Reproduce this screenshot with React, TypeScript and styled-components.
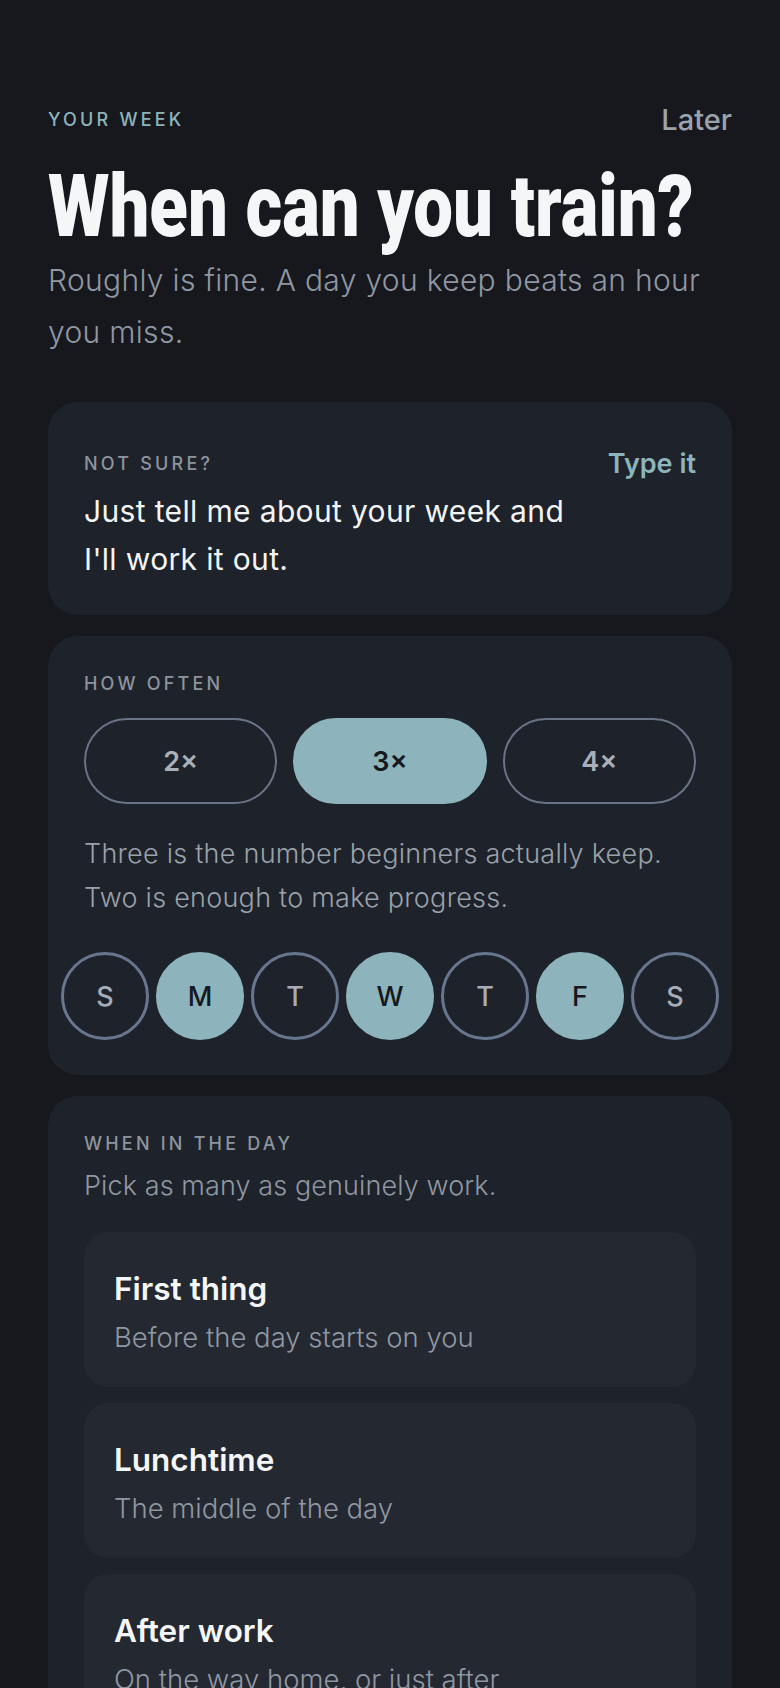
import React, { useLayoutEffect, useRef, useState } from 'react';
import styled, { createGlobalStyle } from 'styled-components';

const GlobalStyle = createGlobalStyle`
    html, body {
        margin: 0;
        padding: 0;
        background: #17181d;
    }
    body {
        font-family: Inter, Roboto, 'Noto Sans', sans-serif;
        color: #f3f4f6;
        -webkit-font-smoothing: antialiased;
    }
    * {
        box-sizing: border-box;
    }
`;

const Page = styled.div`
    min-height: 1688px;
    padding: 100px 48px 40px;
    background: #17181d;
    overflow: hidden;
`;

const Header = styled.div`
    display: flex;
    justify-content: space-between;
    align-items: center;
    height: 40px;
`;

const Eyebrow = styled.span<{ $accent?: boolean }>`
    font-size: 18px;
    line-height: 24px;
    font-weight: 500;
    letter-spacing: 3.2px;
    text-transform: uppercase;
    color: ${(p) => (p.$accent ? '#8db4bc' : '#8d949e')};
`;

const TextButton = styled.button<{ $accent?: boolean }>`
    border: 0;
    background: none;
    padding: 0;
    cursor: pointer;
    font-family: inherit;
    font-size: ${(p) => (p.$accent ? 27 : 29)}px;
    line-height: 34px;
    font-weight: ${(p) => (p.$accent ? 600 : 500)};
    color: ${(p) => (p.$accent ? '#8db4bc' : '#9ba3ad')};
`;

const Title = styled.h1`
    margin: 22px 0 0;
    font-family: Roboto, 'Noto Sans', sans-serif;
    font-size: 88px;
    line-height: 88px;
    font-weight: 900;
    white-space: nowrap;
    color: #f5f6f8;
`;

// the reference uses a condensed display face; squeeze the heavy sans to the same width
const TitleText = styled.span`
    display: inline-block;
    transform-origin: left center;
`;

const Subtitle = styled.p`
    margin: 4px 0 44px;
    font-size: 30px;
    line-height: 52px;
    font-weight: 300;
    letter-spacing: 0.32px;
    color: #8f97a3;
`;

const Stack = styled.div`
    display: flex;
    flex-direction: column;
    gap: 21px;
`;

const Card = styled.section`
    background: #1e222a;
    border-radius: 30px;
    padding: 36px 36px 35px;
`;

const AskCard = styled(Card)`
    display: flex;
    align-items: flex-start;
    gap: 20px;
    padding: 45px 36px 32px;
`;

const AskBody = styled.div`
    flex: 1;
    display: flex;
    flex-direction: column;
    padding-top: 5px;
`;

const AskText = styled.p`
    margin: 11px 0 0;
    font-size: 30px;
    line-height: 48px;
    font-weight: 400;
    letter-spacing: 0.35px;
    color: #f3f4f6;
`;

const Pills = styled.div`
    display: grid;
    grid-template-columns: repeat(3, 1fr);
    gap: 16px;
    margin-top: 22px;
`;

const Pill = styled.button<{ $on: boolean }>`
    height: 86px;
    border-radius: 43px;
    border: 2px solid ${(p) => (p.$on ? '#8db4bc' : '#6a7489')};
    background: ${(p) => (p.$on ? '#8db4bc' : 'transparent')};
    color: ${(p) => (p.$on ? '#161a20' : '#aab0b9')};
    font-family: inherit;
    font-size: 27px;
    font-weight: 600;
    cursor: pointer;
`;

const Note = styled.p`
    margin: 28px 0 0;
    font-size: 27px;
    line-height: 44px;
    font-weight: 300;
    letter-spacing: 0.25px;
    color: #9aa1ab;
`;

const Days = styled.div`
    display: flex;
    justify-content: center;
    gap: 7px;
    margin-top: 32px;
`;

const Day = styled.button<{ $on: boolean }>`
    flex: 0 0 88px;
    height: 88px;
    border-radius: 50%;
    border: 3px solid ${(p) => (p.$on ? '#8db4bc' : '#697690')};
    background: ${(p) => (p.$on ? '#8db4bc' : 'transparent')};
    color: ${(p) => (p.$on ? '#15181d' : '#a6adb7')};
    font-family: inherit;
    font-size: 27px;
    font-weight: 500;
    padding: 0;
    cursor: pointer;
`;

const Hint = styled.p`
    margin: 10px 0 0;
    font-size: 27px;
    line-height: 40px;
    font-weight: 300;
    letter-spacing: 0.1px;
    color: #8f97a3;
`;

const Options = styled.div`
    display: flex;
    flex-direction: column;
    gap: 16px;
    margin-top: 26px;
`;

const Option = styled.button<{ $on: boolean }>`
    display: flex;
    flex-direction: column;
    align-items: flex-start;
    text-align: left;
    width: 100%;
    padding: 38px 30px 31px;
    border-radius: 24px;
    border: 0;
    background: ${(p) => (p.$on ? '#2b3540' : '#242831')};
    font-family: inherit;
    cursor: pointer;
`;

const OptionTitle = styled.span`
    font-size: 31.5px;
    line-height: 38px;
    font-weight: 600;
    color: #f5f6f8;
`;

const OptionSub = styled.span`
    margin-top: 10px;
    font-size: 27.5px;
    line-height: 38px;
    font-weight: 300;
    color: #8f97a3;
`;

const slots = [
    { title: 'First thing', sub: 'Before the day starts on you' },
    { title: 'Lunchtime', sub: 'The middle of the day' },
    { title: 'After work', sub: 'On the way home, or just after' },
    { title: 'Evening', sub: 'Once the day is done' },
];

const dayLetters = ['S', 'M', 'T', 'W', 'T', 'F', 'S'];
const TITLE_WIDTH = 646;

export default function App() {
    const [often, setOften] = useState(3);
    const [days, setDays] = useState<number[]>([1, 3, 5]);
    const [picked, setPicked] = useState<number[]>([]);
    const [squeeze, setSqueeze] = useState(0.78);
    const titleRef = useRef<HTMLSpanElement | null>(null);

    useLayoutEffect(() => {
        if (titleRef.current) {
            const w = titleRef.current.offsetWidth;
            if (w > 0) setSqueeze(TITLE_WIDTH / w);
        }
    }, []);

    const toggle = (list: number[], i: number) => (list.includes(i) ? list.filter((x) => x !== i) : [...list, i]);

    return (
        <Page>
            <GlobalStyle />
            <Header>
                <Eyebrow $accent>Your week</Eyebrow>
                <TextButton>Later</TextButton>
            </Header>
            <Title>
                <TitleText ref={titleRef} style={{ transform: `scaleX(${squeeze})` }}>
                    When can you train?
                </TitleText>
            </Title>
            <Subtitle>Roughly is fine. A day you keep beats an hour you miss.</Subtitle>

            <Stack>
                <AskCard>
                    <AskBody>
                        <Eyebrow>Not sure?</Eyebrow>
                        <AskText>Just tell me about your week and I'll work it out.</AskText>
                    </AskBody>
                    <TextButton $accent>Type it</TextButton>
                </AskCard>

                <Card>
                    <Eyebrow>How often</Eyebrow>
                    <Pills>
                        {[2, 3, 4].map((n) => (
                            <Pill key={n} $on={often === n} onClick={() => setOften(n)}>
                                {n}×
                            </Pill>
                        ))}
                    </Pills>
                    <Note>Three is the number beginners actually keep. Two is enough to make progress.</Note>
                    <Days>
                        {dayLetters.map((d, i) => (
                            <Day key={i} $on={days.includes(i)} onClick={() => setDays(toggle(days, i))}>
                                {d}
                            </Day>
                        ))}
                    </Days>
                </Card>

                <Card>
                    <Eyebrow>When in the day</Eyebrow>
                    <Hint>Pick as many as genuinely work.</Hint>
                    <Options>
                        {slots.map((s, i) => (
                            <Option key={s.title} $on={picked.includes(i)} onClick={() => setPicked(toggle(picked, i))}>
                                <OptionTitle>{s.title}</OptionTitle>
                                <OptionSub>{s.sub}</OptionSub>
                            </Option>
                        ))}
                    </Options>
                </Card>
            </Stack>
        </Page>
    );
}
